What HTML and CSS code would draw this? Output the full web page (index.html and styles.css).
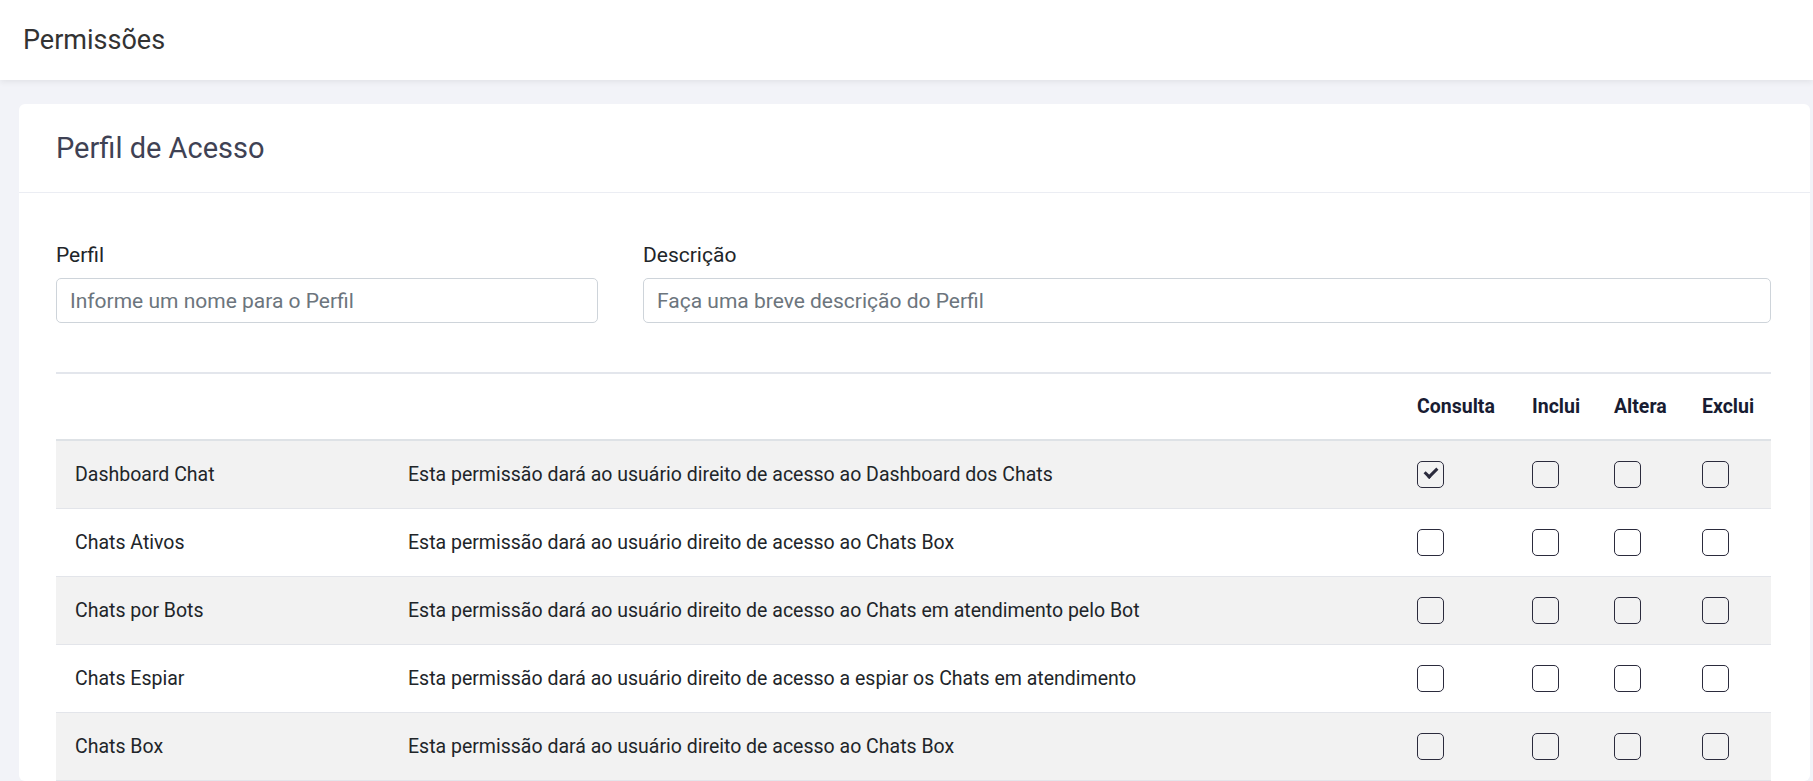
FILE: index.html
```html
<!DOCTYPE html>
<html lang="pt-BR">
<head>
<meta charset="utf-8">
<title>Permissões</title>
<link rel="stylesheet" href="styles.css">
</head>
<body>
<header class="topbar">
  <h1 class="page-title">Permissões</h1>
</header>
<main class="content">
  <section class="card">
    <div class="card-header">
      <h2 class="card-title">Perfil de Acesso</h2>
    </div>
    <div class="card-body">
      <div class="form-row">
        <div class="field">
          <label class="label" for="perfil">Perfil</label>
          <input id="perfil" class="input" type="text" placeholder="Informe um nome para o Perfil">
        </div>
        <div class="field">
          <label class="label" for="descricao">Descrição</label>
          <input id="descricao" class="input" type="text" placeholder="Faça uma breve descrição do Perfil">
        </div>
      </div>

      <div class="perm-table">
        <div class="perm-row perm-head">
          <div class="cell"></div>
          <div class="cell"></div>
          <div class="cell">Consulta</div>
          <div class="cell">Inclui</div>
          <div class="cell">Altera</div>
          <div class="cell">Exclui</div>
        </div>
        <div class="perm-row">
          <div class="cell">Dashboard Chat</div>
          <div class="cell">Esta permissão dará ao usuário direito de acesso ao Dashboard dos Chats</div>
          <div class="cell"><input class="chk" type="checkbox" checked></div>
          <div class="cell"><input class="chk" type="checkbox"></div>
          <div class="cell"><input class="chk" type="checkbox"></div>
          <div class="cell"><input class="chk" type="checkbox"></div>
        </div>
        <div class="perm-row">
          <div class="cell">Chats Ativos</div>
          <div class="cell">Esta permissão dará ao usuário direito de acesso ao Chats Box</div>
          <div class="cell"><input class="chk" type="checkbox"></div>
          <div class="cell"><input class="chk" type="checkbox"></div>
          <div class="cell"><input class="chk" type="checkbox"></div>
          <div class="cell"><input class="chk" type="checkbox"></div>
        </div>
        <div class="perm-row">
          <div class="cell">Chats por Bots</div>
          <div class="cell">Esta permissão dará ao usuário direito de acesso ao Chats em atendimento pelo Bot</div>
          <div class="cell"><input class="chk" type="checkbox"></div>
          <div class="cell"><input class="chk" type="checkbox"></div>
          <div class="cell"><input class="chk" type="checkbox"></div>
          <div class="cell"><input class="chk" type="checkbox"></div>
        </div>
        <div class="perm-row">
          <div class="cell">Chats Espiar</div>
          <div class="cell">Esta permissão dará ao usuário direito de acesso a espiar os Chats em atendimento</div>
          <div class="cell"><input class="chk" type="checkbox"></div>
          <div class="cell"><input class="chk" type="checkbox"></div>
          <div class="cell"><input class="chk" type="checkbox"></div>
          <div class="cell"><input class="chk" type="checkbox"></div>
        </div>
        <div class="perm-row">
          <div class="cell">Chats Box</div>
          <div class="cell">Esta permissão dará ao usuário direito de acesso ao Chats Box</div>
          <div class="cell"><input class="chk" type="checkbox"></div>
          <div class="cell"><input class="chk" type="checkbox"></div>
          <div class="cell"><input class="chk" type="checkbox"></div>
          <div class="cell"><input class="chk" type="checkbox"></div>
        </div>
      </div>
    </div>
  </section>
</main>
</body>
</html>
```

FILE: styles.css
```css
html, body {
  margin: 0;
  padding: 0;
}

body {
  background: #f2f3f8;
  font-family: Roboto, "Liberation Sans", sans-serif;
  color: #212529;
  overflow: hidden;
}

.topbar {
  position: relative;
  z-index: 2;
  height: 80px;
  background: #fff;
  box-shadow: 0 2px 6px rgba(0, 0, 0, 0.07);
  display: flex;
  align-items: center;
  padding-left: 23px;
}

.page-title {
  margin: 0;
  font-size: 27px;
  font-weight: 400;
  color: #333333;
}

.content {
  padding: 24px 3px 0 19px;
}

.card {
  background: #fff;
  border-radius: 6px;
}

.card-header {
  box-sizing: border-box;
  height: 89px;
  border-bottom: 1px solid #ebedf3;
  display: flex;
  align-items: center;
  padding-left: 37px;
}

.card-title {
  margin: 0;
  font-size: 29px;
  font-weight: 400;
  color: #3f4254;
}

.card-body {
  padding: 47px 39px 0 37px;
}

.form-row {
  display: grid;
  grid-template-columns: 542px 1fr;
  column-gap: 45px;
}

.label {
  display: block;
  font-size: 21px;
  line-height: 30px;
  margin-bottom: 8px;
  color: #212529;
}

.input {
  display: block;
  box-sizing: border-box;
  width: 100%;
  height: 45px;
  margin: 0;
  border: 1px solid #ced4da;
  border-radius: 5px;
  padding: 0 13px;
  font-family: Roboto, "Liberation Sans", sans-serif;
  font-size: 21px;
  color: #495057;
  background: #fff;
  outline: none;
}

.input::placeholder {
  color: #6c757d;
}

.perm-table {
  margin-top: 49px;
  border-top: 2px solid #e3e6ec;
}

.perm-row {
  display: grid;
  grid-template-columns: 333px 1009px 115px 82px 88px 1fr;
  align-items: center;
  box-sizing: border-box;
  height: 68px;
  border-bottom: 1px solid #e3e5ea;
  font-size: 19.5px;
  color: #212529;
}

.perm-row:nth-child(even) {
  background: #f2f2f2;
}

.perm-head {
  height: 67px;
  border-bottom: 2px solid #dee2e6;
  font-weight: 700;
  color: #181c32;
}

.cell {
  padding-left: 19px;
  white-space: nowrap;
}

.chk {
  appearance: none;
  -webkit-appearance: none;
  display: block;
  position: relative;
  box-sizing: border-box;
  width: 27px;
  height: 27px;
  margin: 0;
  border: 1.5px solid #2b2b3d;
  border-radius: 5px;
  background: transparent;
}

.chk:checked::after {
  content: "";
  position: absolute;
  left: 8.5px;
  top: 3px;
  width: 5px;
  height: 10px;
  border: solid #2b2b3d;
  border-width: 0 3px 3px 0;
  transform: rotate(45deg);
}
```
